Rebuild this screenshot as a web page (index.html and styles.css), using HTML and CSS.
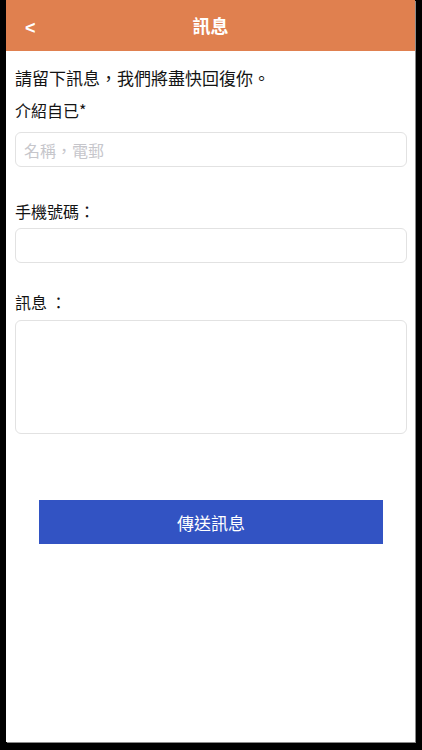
FILE: index.html
```html
<!DOCTYPE html>
<html lang="zh-Hant-TW">
<head>
<meta charset="utf-8">
<title>訊息</title>
<link rel="stylesheet" href="styles.css">
</head>
<body>
<div class="screen">
  <header class="topbar">
    <span class="back">&lt;</span>
    <h1 class="title">訊息</h1>
  </header>
  <main class="content">
    <p class="intro">請留下訊息，我們將盡快回復你。</p>
    <label class="label label-first">介紹自已*</label>
    <input class="field" type="text" placeholder="名稱，電郵">
    <label class="label label-phone">手機號碼：</label>
    <input class="field" type="text">
    <label class="label label-msg">訊息 ：</label>
    <textarea class="field area"></textarea>
    <div class="actions">
      <button class="send" type="button">傳送訊息</button>
    </div>
  </main>
</div>
</body>
</html>
```

FILE: styles.css
```css
html, body {
  margin: 0;
  padding: 0;
  background: #000;
  width: 422px;
  height: 750px;
  overflow: hidden;
}

body {
  font-family: "Noto Sans CJK TC", "Noto Sans", sans-serif;
  color: #141414;
}

.screen {
  margin-left: 6px;
  width: 409px;
  height: 742px;
  background: #fff;
  display: flex;
  flex-direction: column;
  box-shadow: 1px 1px 0 #8a8a8a;
}

.topbar {
  height: 51px;
  background: #e0804f;
  display: flex;
  align-items: center;
  justify-content: center;
  position: relative;
  flex: none;
}

.back {
  position: absolute;
  left: 19px;
  top: 13px;
  color: #fff;
  font-family: "Liberation Sans", sans-serif;
  font-weight: bold;
  font-size: 18px;
  line-height: 30px;
}

.title {
  margin: 0;
  color: #fff;
  font-size: 18px;
  font-weight: bold;
  line-height: 24px;
  margin-top: -1px;
}

.content {
  display: flex;
  flex-direction: column;
  padding: 0 8px 0 9px;
}

.intro {
  margin: 15px 0 0;
  font-size: 17px;
  line-height: 24px;
}

.label {
  display: block;
  font-size: 16px;
  line-height: 22px;
}

.label-first {
  margin-top: 9px;
}

.label-phone {
  margin-top: 33px;
}

.label-msg {
  margin-top: 28px;
}

.field {
  box-sizing: border-box;
  margin: 11px 0 0;
  height: 35px;
  width: 100%;
  border: 1px solid #e2e2e2;
  border-radius: 6px;
  padding: 0 8px;
  font-family: "Noto Sans CJK TC", "Noto Sans", sans-serif;
  font-size: 16px;
  color: #141414;
  background: #fff;
  outline: none;
}

.label-phone + .field {
  margin-top: 6px;
}

.field::placeholder {
  color: #c6c6cb;
}

.area {
  margin-top: 7px;
  height: 114px;
  resize: none;
  display: block;
}

.actions {
  display: flex;
  justify-content: center;
  margin-top: 66px;
}

.send {
  width: 344px;
  height: 44px;
  border: none;
  border-radius: 0;
  background: #3253c3;
  color: #fff;
  font-family: "Noto Sans CJK TC", "Noto Sans", sans-serif;
  font-size: 17px;
  padding: 0;
}
```
